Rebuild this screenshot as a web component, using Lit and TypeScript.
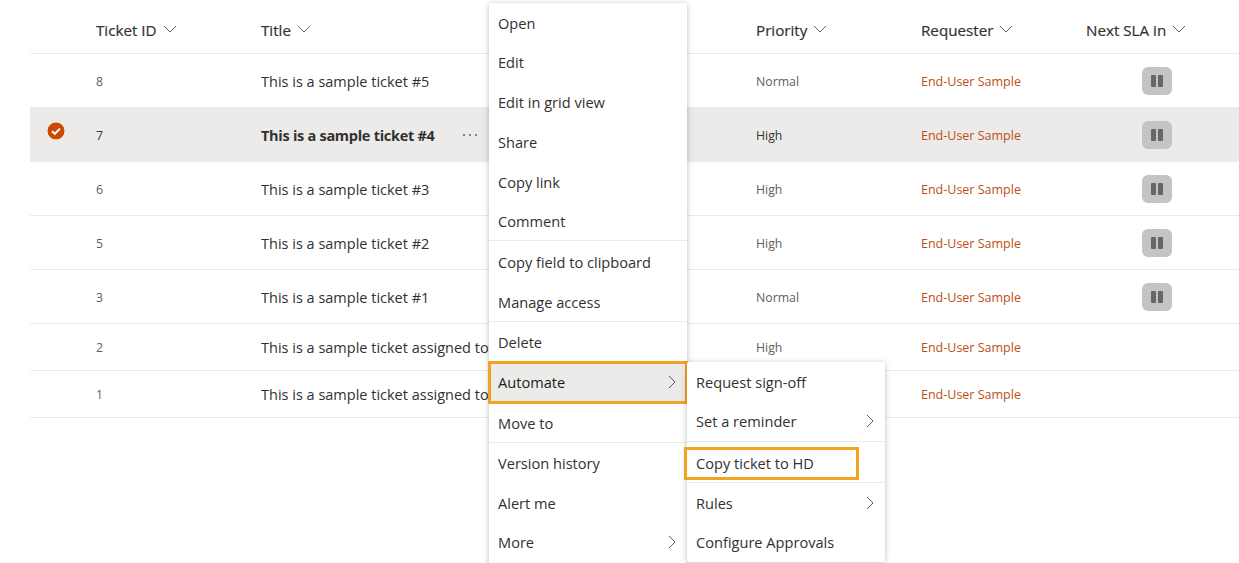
import { LitElement, html, css } from "lit";
import { customElement } from "lit/decorators.js";

const chevDown = html`<svg class="chev" width="14" height="8" viewBox="0 0 14 8"><path d="M1 1l6 6 6-6" fill="none" stroke="#605e5c" stroke-width="1"/></svg>`;
const chevRight = html`<svg class="chevr" width="8" height="14" viewBox="0 0 8 14"><path d="M1 1l6 6-6 6" fill="none" stroke="#605e5c" stroke-width="1"/></svg>`;

type Row = { id: string; title: string; pri: string; sla: boolean; h: number; sel?: boolean; lift?: boolean };
const rows: Row[] = [
  { id: "8", title: "This is a sample ticket #5", pri: "Normal", sla: true, h: 54, lift: true },
  { id: "7", title: "This is a sample ticket #4", pri: "High", sla: true, h: 54, sel: true, lift: true },
  { id: "6", title: "This is a sample ticket #3", pri: "High", sla: true, h: 54, lift: true },
  { id: "5", title: "This is a sample ticket #2", pri: "High", sla: true, h: 54, lift: true },
  { id: "3", title: "This is a sample ticket #1", pri: "Normal", sla: true, h: 54, lift: true },
  { id: "2", title: "This is a sample ticket assigned to", pri: "High", sla: false, h: 47 },
  { id: "1", title: "This is a sample ticket assigned to", pri: "", sla: false, h: 47 },
];

type Item = { t: string; h: number; sub?: boolean; sep?: boolean; cls?: string };
const main: Item[] = [
  { t: "Open", h: 39 }, { t: "Edit", h: 40 }, { t: "Edit in grid view", h: 40 }, { t: "Share", h: 40 },
  { t: "Copy link", h: 40 }, { t: "Comment", h: 39, sep: true },
  { t: "Copy field to clipboard", h: 41 }, { t: "Manage access", h: 40, sep: true },
  { t: "Delete", h: 40, sep: true },
  { t: "Automate", h: 41, sub: true, cls: "auto up" }, { t: "Move to", h: 40, sep: true },
  { t: "Version history", h: 40 }, { t: "Alert me", h: 40 }, { t: "More", h: 40, sub: true, cls: "up" },
];
const subm: Item[] = [
  { t: "Request sign-off", h: 40 }, { t: "Set a reminder", h: 40, sub: true, sep: true, cls: "up" },
  { t: "Copy ticket to HD", h: 41, sep: true, cls: "copy" },
  { t: "Rules", h: 40, sub: true }, { t: "Configure Approvals", h: 39, cls: "up" },
];

@customElement("app-root")
export class AppRoot extends LitElement {
  static styles = css`
    :host { display: block; position: relative; width: 1239px; height: 563px; overflow: hidden; background: #fff;
      font-family: "Open Sans", "Noto Sans", sans-serif; color: #323130; }
    .table { padding-left: 30px; }
    .row { display: grid; grid-template-columns: 66px 165px 495px 165px 165px 1fr; align-items: center;
      border-bottom: 1px solid #edebe9; box-sizing: border-box; }
    .head { height: 54px; font-size: 15.2px; color: #323130; }
    .head .cell { display: flex; align-items: center; gap: 6px; padding-top: 6px; -webkit-text-stroke: 0.2px #323130; }
    .chev { margin-top: -2px; }
    .body { font-size: 12.3px; color: #605e5c; }
    .sel { background: #edebe9; color: #323130; border-bottom-color: #edebe9; }
    .txt { padding-top: 1px; }
    .title { font-size: 14.5px; color: #323130; display: flex; align-items: center; white-space: nowrap; }
    .sel .title { font-weight: 700; letter-spacing: -0.28px; }
    .dots { margin-left: 28px; display: flex; gap: 4px; }
    .dots i { width: 2px; height: 2px; border-radius: 50%; background: #605e5c; }
    .req { color: #bd4f14; font-size: 12.5px; }
    .check { padding: 0 0 8px 16px; display: flex; }
    .sla { padding-left: 56px; display: flex; }
    .pause { width: 30px; height: 28px; border-radius: 6px; background: #c4c4c4; display: flex; align-items: center; justify-content: center; gap: 2px; }
    .pause i { width: 5px; height: 12px; background: #666; border-radius: 1px; }
    .menu { position: absolute; background: #fff; box-shadow: 0 0 4px rgba(0,0,0,.16), 0 3px 8px rgba(0,0,0,.12); border-radius: 2px; width: 198px; }
    .m1 { left: 489px; top: 3px; height: 570px; }
    .m2 { left: 687px; top: 362px; height: 200px; }
    .item { position: relative; display: flex; align-items: center; justify-content: space-between; box-sizing: border-box;
      padding: 0 11px 0 9px; font-size: 14.6px; color: #323130; white-space: nowrap; }
    .up { padding-bottom: 2px; }
    .sep { border-bottom: 1px solid #edebe9; }
    .auto { background: #edebe9; outline: 3px solid #f2a324; outline-offset: -2px; color: #201f1e; }
    .copy { padding-top: 1px; }
    .copy::after { content: ""; position: absolute; left: -3px; top: 5px; width: 175px; height: 33px; box-sizing: border-box; border: 3px solid #f2a324; }
  `;

  private items(list: Item[]) {
    return list.map((i) => html`<div class="item ${i.sep ? "sep" : ""} ${i.cls ?? ""}" style="height:${i.h}px">${i.t}${i.sub ? chevRight : ""}</div>`);
  }

  render() {
    const check = html`<svg width="20" height="20" viewBox="0 0 20 20"><circle cx="10" cy="10" r="9" fill="#ca4a05" stroke="#fbe6d4" stroke-width="1"/><path d="M6 10.2l2.8 2.6L14 7.6" fill="none" stroke="#fff" stroke-width="2"/></svg>`;
    return html`
      <div class="table">
        <div class="row head">
          <div></div>
          <div class="cell">Ticket ID ${chevDown}</div>
          <div class="cell">Title ${chevDown}</div>
          <div class="cell">Priority ${chevDown}</div>
          <div class="cell">Requester ${chevDown}</div>
          <div class="cell">Next SLA in ${chevDown}</div>
        </div>
        ${rows.map((r) => html`
          <div class="row body ${r.sel ? "sel" : ""}" style="height:${r.h}px">
            <div class="check">${r.sel ? check : ""}</div>
            <div class="${r.lift ? "txt" : ""}">${r.id}</div>
            <div class="title ${r.lift ? "txt" : ""}">${r.title}${r.sel ? html`<span class="dots"><i></i><i></i><i></i></span>` : ""}</div>
            <div class="${r.lift ? "txt" : ""}">${r.pri}</div>
            <div class="req ${r.lift ? "txt" : ""}">End-User Sample</div>
            <div class="sla">${r.sla ? html`<div class="pause"><i></i><i></i></div>` : ""}</div>
          </div>`)}
      </div>
      <div class="menu m1">${this.items(main)}</div>
      <div class="menu m2">${this.items(subm)}</div>
    `;
  }
}
